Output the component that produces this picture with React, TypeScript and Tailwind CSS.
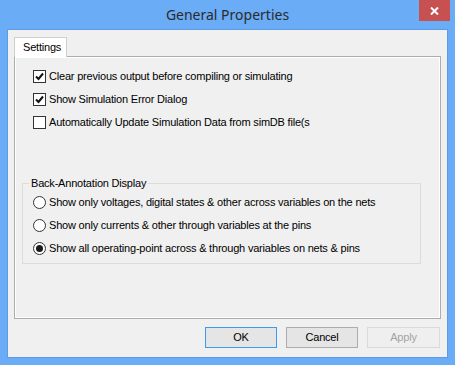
import React from "react";

const body = { fontFamily: '"Liberation Sans", Arial, sans-serif' };

const Check = ({ on }: { on: boolean }) => (
  <span className="flex h-[13px] w-[13px] shrink-0 items-center justify-center border border-[#333333] bg-white">
    {on && (
      <svg width="9" height="9" viewBox="0 0 9 9">
        <path d="M1 4.5 L3.5 7 L8 1.5" fill="none" stroke="#111" strokeWidth="2" />
      </svg>
    )}
  </span>
);

const Radio = ({ on }: { on: boolean }) => (
  <span className="flex h-[13px] w-[13px] shrink-0 items-center justify-center rounded-full border border-[#333333] bg-white">
    {on && <span className="h-[7px] w-[7px] rounded-full bg-[#1a1a1a]" />}
  </span>
);

export default function App() {
  const checks = [
    { label: "Clear previous output before compiling or simulating", on: true },
    { label: "Show Simulation Error Dialog", on: true },
    { label: "Automatically Update Simulation Data from simDB file(s", on: false },
  ];
  const radios = [
    { label: "Show only voltages, digital states & other across variables on the nets", on: false },
    { label: "Show only currents & other through variables at the pins", on: false },
    { label: "Show all operating-point across & through variables on nets & pins", on: true },
  ];

  return (
    <div className="flex h-[365px] w-[455px] flex-col bg-[#6aacf6] px-[7px] pb-[7px]">
      {/* title bar */}
      <div className="relative flex h-[29px] shrink-0 items-center justify-center">
        <span
          className="text-[14px] text-[#2b2b2b]"
          style={{ fontFamily: '"Noto Sans", "Open Sans", sans-serif' }}
        >
          General Properties
        </span>
        <div className="absolute right-[-2px] top-0 flex h-[21px] w-[31px] items-center justify-center bg-[#c75050]">
          <svg width="9" height="8" viewBox="0 0 9 8">
            <path d="M1 0.5 L8 7.5 M8 0.5 L1 7.5" stroke="#fff" strokeWidth="2" />
          </svg>
        </div>
      </div>

      {/* client */}
      <div
        className="flex flex-1 flex-col border border-[#5b9be8] bg-[#f0f0f0] px-[6px] pb-[7px] pt-[7px] text-[11px] tracking-[-0.2px] text-black"
        style={body}
      >
        <div className="flex">
          <div className="relative z-10 -mb-px flex h-[20px] w-[53px] items-center border border-b-0 border-[#cfcfcf] bg-white pl-[8px]">
            Settings
          </div>
        </div>
        <div className="flex h-[263px] flex-col border border-[#adadad] bg-[#f0f0f0] pl-[18px] pr-[19px] pt-[8px] shadow-[inset_1px_1px_0_#ffffff,inset_-1px_-1px_0_#ffffff]">
          {checks.map((c, i) => (
            <div key={i} className="flex h-[23px] items-center gap-[3px]">
              <Check on={c.on} />
              <span>{c.label}</span>
            </div>
          ))}

          <fieldset className="ml-[-11px] mt-[43px] border border-[#dcdcdc] pb-[3px]">
            <legend className="ml-[6px] px-[2px] leading-[13px]">Back-Annotation Display</legend>
            <div className="flex flex-col pl-[10px] pt-[1px]">
              {radios.map((r, i) => (
                <div key={i} className="flex h-[23px] items-center gap-[3px]">
                  <Radio on={r.on} />
                  <span>{r.label}</span>
                </div>
              ))}
            </div>
          </fieldset>
        </div>

        <div className="mt-[8px] flex justify-end gap-[9px] pr-[1px]">
          <button className="h-[21px] w-[72px] border border-[#3c9bf0] bg-[#e5e5e5]">OK</button>
          <button className="h-[21px] w-[72px] border border-[#acacac] bg-[#e5e5e5]">Cancel</button>
          <button className="h-[21px] w-[73px] border border-[#dadada] bg-[#efefef] text-[#a3a3a3]">Apply</button>
        </div>
      </div>
    </div>
  );
}
